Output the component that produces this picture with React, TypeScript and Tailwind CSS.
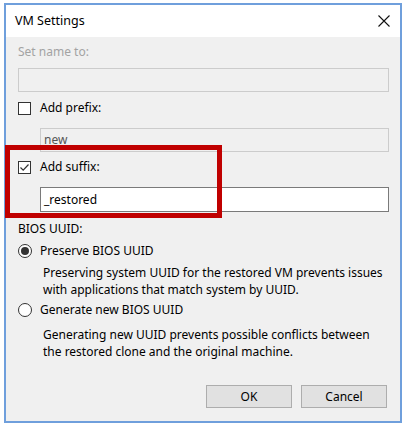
import React from 'react';

const font = { fontFamily: '"Noto Sans", "Open Sans", sans-serif' };

function CheckBox({ checked }: { checked?: boolean }) {
  return (
    <div className="w-[13px] h-[13px] border border-[#333] bg-white flex items-center justify-center shrink-0">
      {checked && (
        <svg width="11" height="11" viewBox="0 0 11 11">
          <path d="M1.5 5.5 L4.2 8.2 L9.5 2.5" stroke="#333" strokeWidth="1.2" fill="none" />
        </svg>
      )}
    </div>
  );
}

function Radio({ checked }: { checked?: boolean }) {
  return (
    <div className="w-[14px] h-[14px] rounded-full border border-[#333] bg-white flex items-center justify-center shrink-0">
      {checked && <div className="w-[8px] h-[8px] rounded-full bg-[#333]" />}
    </div>
  );
}

export default function App() {
  return (
    <div className="w-[407px] h-[426px] bg-white pl-[4px] pt-[3px]" style={font}>
      <div className="relative w-[398px] h-[420px] border-2 border-[#6f9fdc] bg-[#f0f0f0] flex flex-col text-[12px] text-black whitespace-nowrap">
        {/* Title bar */}
        <div className="h-[32px] bg-white flex items-center justify-between pl-[9px] pr-[10px] shrink-0">
          <span className="text-[12.5px]">VM Settings</span>
          <svg width="12" height="12" viewBox="0 0 12 12">
            <path d="M0.5 0.5 L11.5 11.5 M11.5 0.5 L0.5 11.5" stroke="#111" strokeWidth="1.1" />
          </svg>
        </div>

        {/* Content */}
        <div className="flex flex-col pl-[12px] pr-[11px]">
          <div className="h-[20px] mt-[5px] flex items-center text-[#a3a3a3]">Set name to:</div>
          <div className="h-[24px] mt-[6px] border border-[#cccccc] bg-[#f0f0f0]" />

          <div className="h-[20px] mt-[6px] flex items-center gap-[9px]">
            <CheckBox />
            <span>Add prefix:</span>
          </div>
          <div className="h-[24px] mt-[10px] ml-[22px] border border-[#cccccc] bg-[#f0f0f0] flex items-center pl-[3px] text-[#555]">
            new_
          </div>

          <div className="h-[20px] mt-[5px] flex items-center gap-[9px]">
            <CheckBox checked />
            <span>Add suffix:</span>
          </div>
          <div className="h-[25px] mt-[10px] ml-[22px] border border-[#7a7a7a] bg-white flex items-center pl-[3px]">
            _restored
          </div>

          <div className="h-[20px] mt-[7px] flex items-center">BIOS UUID:</div>
          <div className="h-[20px] mt-[2px] flex items-center gap-[8px]">
            <Radio checked />
            <span>Preserve BIOS UUID</span>
          </div>
          <div className="mt-[3px] ml-[25px] leading-[17px]">
            <div>Preserving system UUID for the restored VM prevents issues</div>
            <div>with applications that match system by UUID.</div>
          </div>
          <div className="h-[20px] mt-[2px] flex items-center gap-[8px]">
            <Radio />
            <span>Generate new BIOS UUID</span>
          </div>
          <div className="mt-[6px] ml-[25px] leading-[17px]">
            <div>Generating new UUID prevents possible conflicts between</div>
            <div>the restored clone and the original machine.</div>
          </div>

          <div className="mt-[25px] flex justify-end gap-[9px] pr-[2px]">
            <button className="w-[86px] h-[23px] bg-[#e1e1e1] border border-[#adadad]">OK</button>
            <button className="w-[86px] h-[23px] bg-[#e1e1e1] border border-[#adadad]">Cancel</button>
          </div>
        </div>

        {/* Highlight annotation */}
        <div className="absolute left-[-1px] top-[140px] w-[217px] h-[73px] border-[5px] border-[#c00000] pointer-events-none" />
      </div>
    </div>
  );
}
